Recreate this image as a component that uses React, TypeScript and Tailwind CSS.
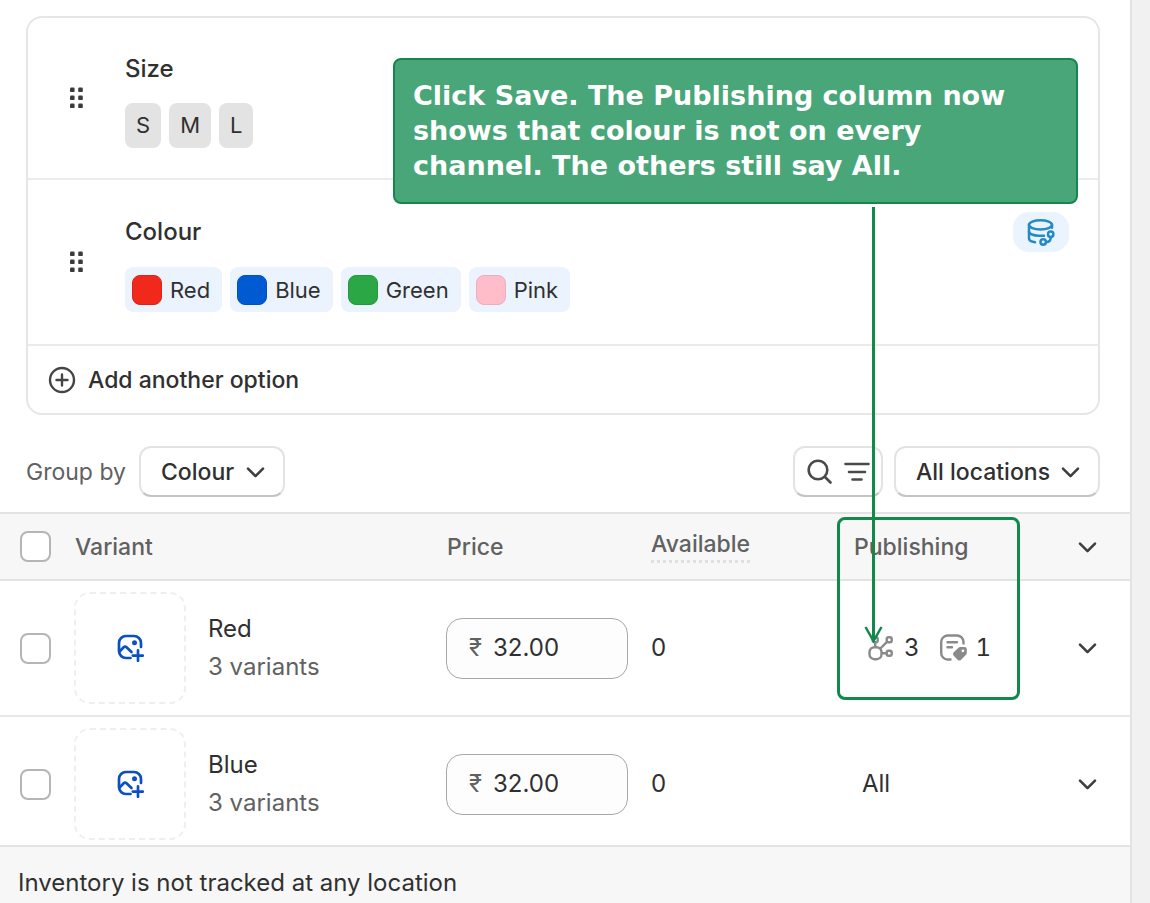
import { useState } from "react";

const SIZES = ["S", "M", "L"];

const COLOURS = [
  { name: "Red", swatch: "bg-[#f1291c] border-[#dc2419]" },
  { name: "Blue", swatch: "bg-[#005bd3] border-[#0052c0]" },
  { name: "Green", swatch: "bg-[#2ba745] border-[#25983d]" },
  { name: "Pink", swatch: "bg-[#ffbdca] border-[#ecaebb]" },
];

const VARIANTS = [
  { name: "Red", count: 3, price: "32.00", available: 0, channels: 3, catalogs: 1 },
  { name: "Blue", count: 3, price: "32.00", available: 0, channels: null, catalogs: null },
];

function DragHandle() {
  return (
    <button type="button" aria-label="Reorder option" className="w-4 shrink-0">
      <svg width="16" height="22" viewBox="0 0 16 22" fill="#3b3b3b">
        {[1, 9, 17].map((y) => (
          <g key={y}>
            <rect x="2" y={y - 0.5} width="4.6" height="4.6" rx="1.2" />
            <rect x="10.2" y={y - 0.5} width="4.6" height="4.6" rx="1.2" />
          </g>
        ))}
      </svg>
    </button>
  );
}

function Chevron() {
  return (
    <svg width="19" height="12" viewBox="0 0 19 12" fill="none" stroke="#3f3f3f" strokeWidth="2.6" strokeLinecap="round" strokeLinejoin="round">
      <path d="M2 2.6l7.5 7.5 7.5-7.5" />
    </svg>
  );
}

function ImageAddIcon() {
  return (
    <svg width="28" height="28" viewBox="0 0 28 28" fill="none" stroke="#0a50c4" strokeWidth="2.7" strokeLinecap="round" strokeLinejoin="round">
      <path d="M25 13V9a7 7 0 0 0-7-7h-8a7 7 0 0 0-7 7v8a7 7 0 0 0 7 7h4.5" />
      <path d="M3.5 17.5l4.2-4.2a2 2 0 0 1 2.800 0l5 4.700" />
      <circle cx="18.500" cy="8.700" r="2.500" fill="#0a50c4" stroke="none" />
      <path d="M22 16.400v10.400M16.800 21.600h10" />
    </svg>
  );
}

function ChannelsIcon() {
  return (
    <svg width="26" height="26" viewBox="0 0 26 26" fill="none" stroke="#8a8a8a" strokeWidth="2.4">
      <rect x="1.5" y="12.2" width="12" height="12" rx="5" />
      <rect x="4.7" y="2.2" width="5" height="5" rx="1.8" />
      <rect x="18.700" y="2.2" width="5" height="5" rx="1.8" />
      <rect x="18.700" y="15.700" width="5" height="5" rx="1.8" />
      <path d="M7.200 7.200v5M19 6.900l-7.200 7.100M13.700 18.200h5" />
    </svg>
  );
}

function CatalogIcon() {
  return (
    <svg width="28" height="28" viewBox="0 0 28 28" fill="none" stroke="#8a8a8a" strokeWidth="2.4" strokeLinecap="round">
      <path d="M23.500 9.500V8A6.500 6.500 0 0 0 17 1.500H7.500A6.500 6.500 0 0 0 1.200 8v11a6.500 6.500 0 0 0 6.300 6.500h3" />
      <path d="M7.500 8.200h9.500M7.500 13.200H12" />
      <path d="M20.300 13h4.200a2.300 2.300 0 0 1 2.300 2.300v3.700a2.500 2.500 0 0 1-.8 1.800l-4.900 4.900a2.500 2.500 0 0 1-3.500 0l-3.900-3.900a2.500 2.500 0 0 1 0-3.500l4.800-4.600a2.500 2.500 0 0 1 1.800-.7z" fill="#8a8a8a" stroke="none" />
      <circle cx="22.900" cy="16.800" r="1.4" fill="#fff" stroke="none" />
    </svg>
  );
}

function MetafieldIcon() {
  return (
    <svg width="28" height="28" viewBox="0 0 28 28" fill="none" stroke="#2489c4" strokeWidth="2.5" strokeLinecap="round">
      <ellipse cx="13.500" cy="6.800" rx="11.500" ry="4.600" />
      <path d="M2 6.800V20.500c0 1.900 2.200 3.200 6 3.800" />
      <path d="M25 6.800v3" />
      <path d="M2 13.500c0 2.400 4.600 4.200 9.500 4.300H17" />
      <circle cx="23.700" cy="16.200" r="2.700" />
      <circle cx="16.200" cy="24" r="2.700" />
      <path d="M23.700 19.200c0 3-1.200 4.700-4.400 4.900" />
    </svg>
  );
}

const checkboxClass =
  "block size-[31px] appearance-none rounded-lg border-2 border-[#b5b5b5] bg-white checked:bg-[#303030]";

const selectClass =
  "h-[51px] appearance-none rounded-xl border-2 border-[#e3e3e3] border-b-[#c4c4c4] bg-white pl-5 font-medium text-[#303030]";

export default function App() {
  const [groupBy, setGroupBy] = useState("Colour");
  const [prices, setPrices] = useState(VARIANTS.map((v) => v.price));

  return (
    <div className="min-h-screen bg-[#f1f1f1] pr-[18px] font-['Inter',sans-serif] text-[23px] leading-7 text-[#303030]">
      <main className="relative flex min-h-screen flex-col border-r-2 border-[#e3e3e3] bg-white pt-4">
        {/* Options */}
        <section className="mr-[30px] ml-[26px] rounded-2xl border-2 border-[#e6e6e6]">
          <div className="flex h-[162px] items-center gap-[41px] border-b-2 border-[#ebebeb] pl-10">
            <DragHandle />
            <div className="space-y-5 pt-1.5">
              <h2 className="text-[24px] font-medium">Size</h2>
              <div className="flex gap-2 text-[22px]">
                {SIZES.map((s) => (
                  <span key={s} className="flex h-[45px] items-center rounded-lg bg-[#e3e3e3] px-[11px]">
                    {s}
                  </span>
                ))}
              </div>
            </div>
          </div>

          <div className="flex h-[166px] items-center gap-[41px] border-b-2 border-[#ebebeb] pl-10">
            <DragHandle />
            <div className="space-y-[21px] pt-1.5">
              <h2 className="text-[24px] font-medium">Colour</h2>
              <div className="flex gap-2 text-[22px]">
                {COLOURS.map((c) => (
                  <span key={c.name} className="flex h-[45px] items-center gap-2 rounded-lg bg-[#eaf3fe] pr-3 pl-[7px]">
                    <span className={`size-[30px] rounded-lg border ${c.swatch}`} />
                    {c.name}
                  </span>
                ))}
              </div>
            </div>
            <button
              type="button"
              aria-label="Connected metafield"
              className="mt-8 mr-[29px] ml-auto flex h-10 w-14 items-center justify-center self-start rounded-2xl bg-[#eaf4ff]"
            >
              <MetafieldIcon />
            </button>
          </div>

          <button type="button" className="flex h-[67px] w-full items-center gap-3 pl-5 font-medium">
            <svg width="28" height="28" viewBox="0 0 28 28" fill="none" stroke="#454545" strokeWidth="2.4" strokeLinecap="round">
              <circle cx="14" cy="14" r="12" />
              <path d="M14 8.5v11M8.5 14h11" />
            </svg>
            Add another option
          </button>
        </section>

        {/* Toolbar */}
        <div className="mt-[31px] mr-[30px] ml-[26px] flex items-center">
          <label htmlFor="group-by" className="mr-[13px] text-[#616161]">
            Group by
          </label>
          <div className="relative">
            <select
              id="group-by"
              value={groupBy}
              onChange={(e) => setGroupBy(e.target.value)}
              className={`${selectClass} w-[146px]`}
            >
              <option>Colour</option>
              <option>Size</option>
            </select>
            <span className="pointer-events-none absolute inset-y-0 right-5 flex items-center">
              <Chevron />
            </span>
          </div>
          <button
            type="button"
            aria-label="Search and filter"
            className="mr-[11px] ml-auto flex h-[51px] w-[90px] items-center gap-3 rounded-xl border-2 border-[#e3e3e3] border-b-[#c4c4c4] pl-3"
          >
            <svg width="25" height="25" viewBox="0 0 25 25" fill="none" stroke="#4a4a4a" strokeWidth="2.6" strokeLinecap="round">
              <circle cx="11" cy="11" r="9.3" />
              <path d="M18 18l5.5 5.5" />
            </svg>
            <svg width="26" height="20" viewBox="0 0 26 20" fill="none" stroke="#4a4a4a" strokeWidth="2.6" strokeLinecap="round">
              <path d="M1.5 2h23M5 10h16M8.5 17.5h9" />
            </svg>
          </button>
          <div className="relative">
            <select aria-label="Location" className={`${selectClass} w-[206px]`}>
              <option>All locations</option>
            </select>
            <span className="pointer-events-none absolute inset-y-0 right-5 flex items-center">
              <Chevron />
            </span>
          </div>
        </div>

        {/* Variants */}
        <table className="mt-[15px] w-full table-fixed border-collapse text-left">
          <colgroup>
            <col className="w-[74px]" />
            <col />
            <col className="w-[205px]" />
            <col className="w-[203px]" />
            <col className="w-[224px]" />
            <col className="w-[52px]" />
          </colgroup>
          <thead>
            <tr className="h-[67px] border-y-2 border-[#e3e3e3] bg-[#f7f7f7] text-[#616161]">
              <th className="pl-5">
                <input type="checkbox" aria-label="Select all variants" className={checkboxClass} />
              </th>
              <th className="pl-px font-medium">Variant</th>
              <th className="pl-px font-medium">Price</th>
              <th className="font-medium">
                <span className="inline-block border-b-3 border-dotted border-[#e0e0e0] pb-0.5">Available</span>
              </th>
              <th className="font-medium">Publishing</th>
              <th>
                <button type="button" aria-label="Expand all" className="block">
                  <Chevron />
                </button>
              </th>
            </tr>
          </thead>
          <tbody className="text-[24px]">
            {VARIANTS.map((v, i) => (
              <tr key={v.name} className="border-b-2 border-[#e8e8e8]">
                <td className="pl-5">
                  <input type="checkbox" aria-label={`Select ${v.name}`} className={checkboxClass} />
                </td>
                <td className="py-[11px]">
                  <div className="flex items-center gap-[22px]">
                    <button
                      type="button"
                      aria-label={`Add image to ${v.name}`}
                      className="flex size-28 items-center justify-center rounded-2xl border-2 border-dashed border-[#efefef]"
                    >
                      <ImageAddIcon />
                    </button>
                    <div className="space-y-2.5">
                      <p>{v.name}</p>
                      <p className="text-[#616161]">{v.count} variants</p>
                    </div>
                  </div>
                </td>
                <td>
                  <label className="flex h-[61px] w-[182px] items-center gap-[11px] rounded-2xl border border-[#a8a8a8] bg-[#fdfdfd] pl-[22px]">
                    <span className="text-[#616161]">₹</span>
                    <input
                      aria-label={`${v.name} price`}
                      value={prices[i]}
                      onChange={(e) => setPrices(prices.map((p, n) => (n === i ? e.target.value : p)))}
                      className="w-28 bg-transparent outline-none"
                    />
                  </label>
                </td>
                <td>{v.available}</td>
                <td>
                  {v.channels === null ? (
                    <span className="pl-2">All</span>
                  ) : (
                    <div className="flex items-center gap-2.5 pl-3.5 tabular-nums">
                      <ChannelsIcon />
                      {v.channels}
                      <span className="ml-2.5 flex items-center gap-2">
                        <CatalogIcon />
                        {v.catalogs}
                      </span>
                    </div>
                  )}
                </td>
                <td>
                  <button type="button" aria-label={`Expand ${v.name}`} className="block">
                    <Chevron />
                  </button>
                </td>
              </tr>
            ))}
          </tbody>
        </table>

        {/* Summary bar overlaps the end of the list */}
        <footer className="relative -mt-2 flex-1 border-t-2 border-[#e3e3e3] bg-[#f7f7f7] pt-[22px] pl-[18px] text-[24px]">
          Inventory is not tracked at any location
        </footer>

        {/* Walkthrough callout */}
        <div className="absolute top-[58px] right-[52px] h-[146px] w-[685px] rounded-lg border-2 border-[#12884c] bg-[#49a678] p-[18px] font-['DejaVu_Sans',sans-serif] text-[27px] leading-[35px] font-bold text-white">
          Click Save. The Publishing column now shows that colour is not on every channel. The others still say All.
        </div>
        <svg className="pointer-events-none absolute top-[207px] right-[246px]" width="20" height="436" viewBox="0 0 20 436" fill="none" stroke="#12884c">
          <path d="M9.5 0v434" strokeWidth="3" />
          <path d="M1.5 420l8 14 8-14" strokeWidth="2.5" />
        </svg>
        <div className="pointer-events-none absolute top-[517px] right-[110px] h-[183px] w-[183px] rounded-lg border-3 border-[#12884c]" />
      </main>
    </div>
  );
}
